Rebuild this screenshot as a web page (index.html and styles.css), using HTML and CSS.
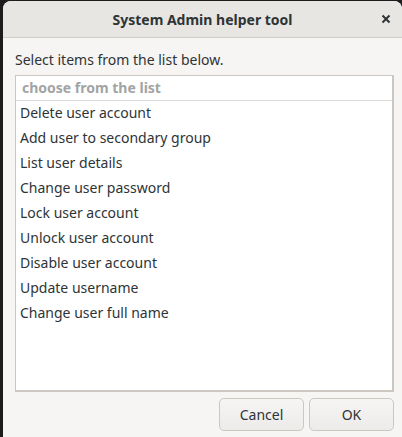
FILE: index.html
```html
<!DOCTYPE html>
<html>
<head>
<meta charset="utf-8">
<link rel="stylesheet" href="styles.css">
</head>
<body>
<div class="window">
  <div class="titlebar">
    <span class="title">System Admin helper tool</span>
    <span class="close">
      <svg width="10" height="10" viewBox="0 0 10 10"><path d="M1.5 1.5 L8.5 8.5 M8.5 1.5 L1.5 8.5" stroke="#2e3436" stroke-width="2" stroke-linecap="butt"/></svg>
    </span>
  </div>
  <div class="content">
    <div class="label">Select items from the list below.</div>
    <div class="list">
      <div class="header">choose from the list</div>
      <div class="row">Delete user account</div>
      <div class="row">Add user to secondary group</div>
      <div class="row">List user details</div>
      <div class="row">Change user password</div>
      <div class="row">Lock user account</div>
      <div class="row">Unlock user account</div>
      <div class="row">Disable user account</div>
      <div class="row">Update username</div>
      <div class="row">Change user full name</div>
    </div>
    <div class="buttons">
      <button class="btn">Cancel</button>
      <button class="btn">OK</button>
    </div>
  </div>
</div>
</body>
</html>
```
FILE: styles.css
```css
html, body {
  margin: 0;
  padding: 0;
  background: #1c1c1c;
  height: 437px;
  overflow: hidden;
}
.window {
  margin: 1px 0 0 3px;
  height: 436px;
  background: #f6f5f4;
  border-radius: 8px 8px 0 0;
  display: flex;
  flex-direction: column;
  font-family: "Noto Sans", sans-serif;
  font-size: 14px;
  color: #2e3436;
}
.titlebar {
  height: 36px;
  flex: none;
  background: #e8e6e3;
  border-bottom: 1px solid #d2cfcb;
  border-radius: 8px 8px 0 0;
  display: flex;
  align-items: center;
  justify-content: center;
  position: relative;
}
.title {
  font-weight: bold;
  font-size: 14px;
  color: #2e3436;
}
.close {
  position: absolute;
  right: 11px;
  top: 13px;
  width: 10px;
  height: 10px;
  display: flex;
}
.content {
  flex: 1;
  display: flex;
  flex-direction: column;
  padding: 12px 8px 6px 12px;
}
.label {
  height: 25px;
  line-height: 19px;
}
.list {
  flex: none;
  height: 314px;
  background: #ffffff;
  border: 1px solid #cdc7c2;
  border-bottom-width: 2px;
  border-right-width: 2px;
  display: flex;
  flex-direction: column;
}
.header {
  height: 24px;
  line-height: 24px;
  border-bottom: 1px solid #dcd8d4;
  padding-left: 6px;
  font-weight: bold;
  color: #a2a4a4;
}
.row {
  height: 25px;
  line-height: 23px;
  padding-bottom: 2px;
  box-sizing: border-box;
  padding-left: 4px;
}
.buttons {
  display: flex;
  justify-content: flex-end;
  gap: 5px;
  margin-top: 6px;
}
.btn {
  width: 85px;
  height: 33px;
  border: 1px solid #cdc7c2;
  border-radius: 5px;
  background: linear-gradient(#f6f5f4, #edebe9);
  font-family: "Noto Sans", sans-serif;
  font-size: 14px;
  color: #2e3436;
  padding: 0;
}
```
